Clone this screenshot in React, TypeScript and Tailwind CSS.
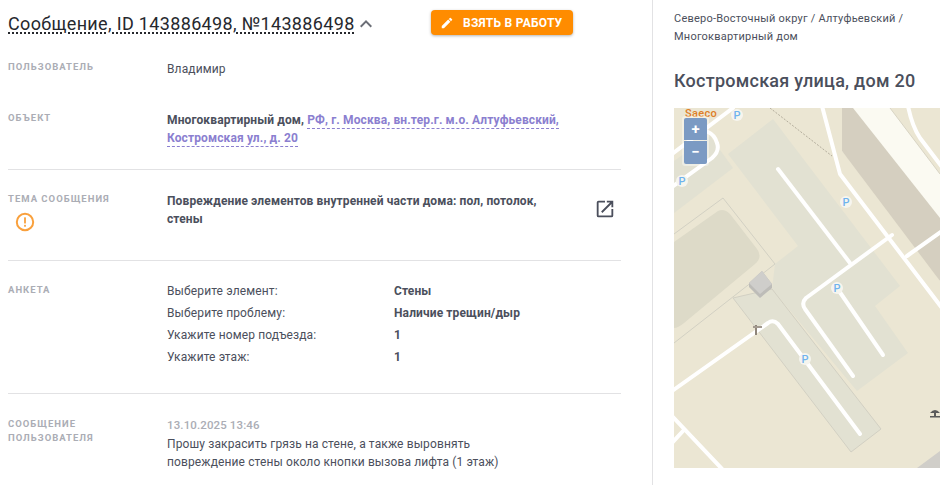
import React from "react";

const font = { fontFamily: "Roboto, 'Liberation Sans', sans-serif" };

function Label({ children }: { children: React.ReactNode }) {
  return (
    <div className="w-[159px] shrink-0 text-[9.5px] leading-[14px] font-bold tracking-[1px] uppercase text-[#abadb5]">
      {children}
    </div>
  );
}

function P({ x, y }: { x: number; y: number }) {
  return (
    <g>
      <circle cx={x} cy={y} r={6} fill="#f6f5ef" />
      <text x={x} y={y + 4} textAnchor="middle" fontSize="11" fontWeight="500" fontFamily="Roboto, sans-serif" fill="#6fb3ee">
        P
      </text>
    </g>
  );
}

function MapArt() {
  return (
    <svg viewBox="674 107 266 360" className="block w-full h-full">
      <rect x="674" y="107" width="266" height="360" fill="#ebe6d3" />
      {/* pale + dark bands */}
      <polygon points="842,107 890,107 940,173 940,280 917,240 842,150" fill="#fbfaf2" />
      <polygon points="842,107 853,107 940,217 940,280 842,150" fill="#d5cfc0" />
      {/* light areas */}
      <polygon points="773,118 728,153 798,245 775,263 772,288 857,390 908,352 875,305 900,285" fill="#e2e1d2" />
      <polygon points="710,135 733,167 674,212 674,160" fill="#e2e1d2" />
      <polygon points="733,297 851,451 881,428 772,288" fill="#e2e1d2" stroke="#d2d0c3" strokeWidth="1" />
      {/* lot */}
      <path d="M674,233 L723,197 L775,263 L674,342" fill="none" stroke="#d2d0c3" strokeWidth="1" />
      <path d="M674,241 L718,210 Q724,207 730,213 L757,248 Q763,256 755,263 L684,322 Q678,327 674,327 Z" fill="#dddac8" />
      {/* bottom right building */}
      <polygon points="917,467 940,450 940,467" fill="#d0cec9" />
      {/* small building */}
      <polygon points="749,282 762,270 772,283 772,287 760,297 749,286" fill="#bdbcb8" />
      <polygon points="749,282 762,270 772,283 760,293" fill="#cfcecb" />
      {/* dashed path */}
      <path d="M770,107 L832,155" stroke="#b3ad9c" strokeWidth="1" strokeDasharray="2 1.5" fill="none" />
      {/* roads */}
      <g fill="none" stroke="#ffffff" strokeWidth="4" strokeLinecap="round" strokeLinejoin="round">
        <path d="M672,153 L733,107" />
        <path d="M672,186 L712,157 Q720,150 717,142 Q715,134 708,131" />
        <path d="M778,168 L850,262" />
        <path d="M892,234 L806,297 Q801,302 805,308 L853,375" />
        <path d="M837,287 L883,354" />
        <path d="M672,390 L768,322 Q773,318 778,323 L860,433" />
        <path d="M822,105 L840,173 L942,307" />
        <path d="M907,255 L942,230" />
        <path d="M908,105 Q912,125 920,137 L942,166" />
        <path d="M672,415 L724,470" />
        <path d="M672,442 L683,430" />
      </g>
      <path d="M890,107 L940,173" stroke="#d8d4c4" strokeWidth="1" fill="none" />
      {/* P markers */}
      <P x={737} y={114} />
      <P x={682} y={180} />
      <P x={846} y={201} />
      <P x={837} y={287} />
      <P x={805} y={358} />
      {/* signpost */}
      <path d="M756,324 V334" stroke="#8f857a" strokeWidth="2" />
      <path d="M753,326 H762" stroke="#a39a8f" strokeWidth="2" />
      {/* umbrella */}
      <path d="M930,412 Q935,406 940,412 Z M934,410 H936 V415 H934 Z M930,415 H940 V416.5 H930 Z" fill="#5b5b5b" />
      <text x="685" y="115.5" fontSize="11" fontWeight="500" fontFamily="Roboto, sans-serif" fill="#de7e28" letterSpacing="0.3">
        Saeco
      </text>
    </svg>
  );
}

export default function App() {
  return (
    <div style={font} className="w-[940px] h-[485px] overflow-hidden bg-white flex text-[#4b4f5c]">
      {/* left column */}
      <div className="w-[653px] shrink-0 border-r border-[#e2e2e4] pl-2 pr-[31px]">
        <div className="flex items-start h-[47px] pt-[10px]">
          <div className="flex items-center h-[27px] w-[423px]">
            <span className="text-[18px] leading-[27px] tracking-[0.34px] text-[#26282d] underline decoration-dotted decoration-[2px] underline-offset-[2px]">
              Сообщение, ID 143886498, №143886498
            </span>
            <svg viewBox="0 0 24 24" className="w-[24px] h-[24px] -ml-[1px] fill-[#6b6e76]">
              <path d="M7.41 15.41 12 10.83l4.59 4.58L18 14l-6-6-6 6z" />
            </svg>
          </div>
          <button className="w-[142px] h-[25px] rounded-[4px] bg-[#ff8c00] shadow-[0_1px_3px_rgba(0,0,0,0.3)] flex items-center pl-[9px] text-white text-[12px] font-bold tracking-[0.25px] uppercase">
            <svg viewBox="0 0 24 24" className="w-[14px] h-[14px] fill-white mr-[9px]">
              <path d="M3 17.25V21h3.75L17.81 9.94l-3.75-3.75L3 17.25zM20.71 7.04a1 1 0 0 0 0-1.41l-2.34-2.34a1 1 0 0 0-1.41 0l-1.83 1.83 3.75 3.75 1.83-1.83z" />
            </svg>
            Взять в работу
          </button>
        </div>

        {/* user */}
        <div className="flex h-[51px] pt-[13px]">
          <Label>Пользователь</Label>
          <div className="text-[12px] tracking-[0.12px] leading-[18px]">Владимир</div>
        </div>

        {/* object */}
        <div className="flex h-[72px] border-b border-[#e2e2e4] pt-[13px]">
          <Label>Объект</Label>
          <div className="w-[400px] text-[12px] tracking-[0.12px] leading-[18px] font-bold">
            Многоквартирный дом,{" "}
            <span className="text-[#8b7fd0] border-b border-dashed border-[#8b7fd0] pb-[1px]">
              РФ, г. Москва, вн.тер.г. м.о. Алтуфьевский, Костромская ул., д. 20
            </span>
          </div>
        </div>

        {/* topic */}
        <div className="flex h-[91px] border-b border-[#e2e2e4] pt-[22px]">
          <div className="w-[159px] shrink-0">
            <Label>Тема сообщения</Label>
            <svg viewBox="0 0 20 20" className="w-[20px] h-[20px] mt-[6px] ml-[7px]">
              <circle cx="10" cy="10" r="8.2" fill="none" stroke="#f9a03c" strokeWidth="2" />
              <rect x="9.1" y="5.2" width="1.8" height="6.4" rx="0.5" fill="#f9a03c" />
              <rect x="9.1" y="12.8" width="1.8" height="1.9" rx="0.5" fill="#f9a03c" />
            </svg>
          </div>
          <div className="w-[395px] text-[12px] tracking-[0.12px] leading-[18px] font-bold">
            Повреждение элементов внутренней части дома: пол, потолок, стены
          </div>
          <svg viewBox="0 0 24 24" className="w-[22px] h-[22px] ml-[32px] mt-[6px] fill-[#4b4f5c]">
            <path d="M19 19H5V5h7V3H5a2 2 0 0 0-2 2v14a2 2 0 0 0 2 2h14a2 2 0 0 0 2-2v-7h-2v7zM14 3v2h3.59l-9.83 9.83 1.41 1.41L19 6.41V10h2V3h-7z" />
          </svg>
        </div>

        {/* form */}
        <div className="flex h-[133px] border-b border-[#e2e2e4] pt-[22px]">
          <Label>Анкета</Label>
          <div className="grid grid-cols-[227px_1fr] auto-rows-[22px] text-[12px] tracking-[0.12px] leading-[18px] items-center h-fit -mt-[3px]">
            <div>Выберите элемент:</div>
            <div className="font-bold">Стены</div>
            <div>Выберите проблему:</div>
            <div className="font-bold">Наличие трещин/дыр</div>
            <div>Укажите номер подъезда:</div>
            <div className="font-bold">1</div>
            <div>Укажите этаж:</div>
            <div className="font-bold">1</div>
          </div>
        </div>

        {/* message */}
        <div className="flex pt-[23px]">
          <Label>
            Сообщение
            <br />
            пользователя
          </Label>
          <div className="text-[12px] tracking-[0.12px] leading-[18px] -mt-[1px]">
            <div className="font-medium text-[11.5px] text-[#abadb5] leading-[19px]">13.10.2025 13:46</div>
            <div>Прошу закрасить грязь на стене, а также выровнять</div>
            <div>повреждение стены около кнопки вызова лифта (1 этаж)</div>
          </div>
        </div>
      </div>

      {/* right column */}
      <div className="flex-1 pl-[21px] pt-[10px] min-w-0">
        <div className="w-[250px] text-[11px] tracking-[0.22px] leading-[18px]">
          Северо-Восточный округ / Алтуфьевский / Многоквартирный дом
        </div>
        <div className="mt-[22px] text-[18px] tracking-[0.25px] leading-[26px] font-medium">Костромская улица, дом 20</div>
        <div className="relative mt-[14px] w-[266px] h-[360px] overflow-hidden">
          <MapArt />
          <div className="absolute left-[8px] top-[8px] p-[2px] rounded-[3px] bg-white/40">
            <div className="w-[23px] h-[22px] mb-[1px] rounded-t-[2px] bg-[#7b9ac3] flex items-center justify-center text-white font-bold text-[15px] leading-none">
              +
            </div>
            <div className="w-[23px] h-[23px] rounded-b-[2px] bg-[#7b9ac3] flex items-center justify-center text-white font-bold text-[15px] leading-none">
              −
            </div>
          </div>
        </div>
      </div>
    </div>
  );
}
